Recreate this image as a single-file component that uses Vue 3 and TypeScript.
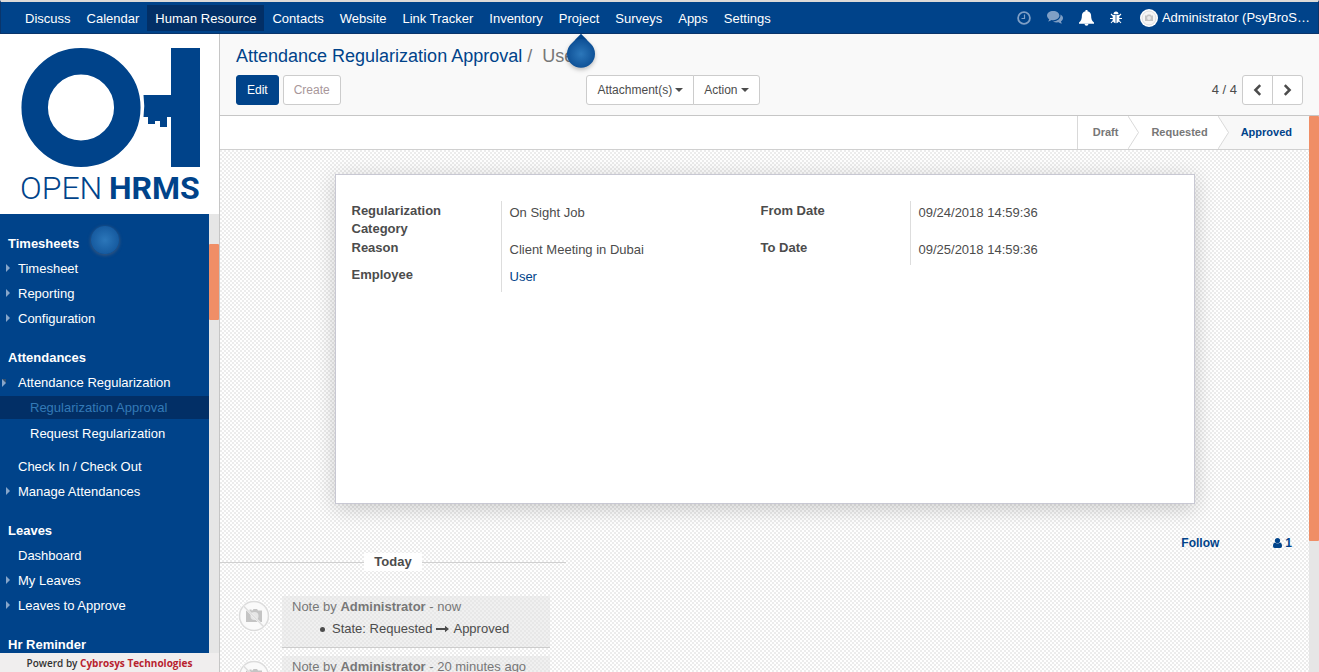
<script setup lang="ts">
import { ref } from 'vue'

interface MenuItem {
  label: string
  kind: 'section' | 'item' | 'sub'
  arrow?: 'closed' | 'expanded'
  active?: boolean
  last?: boolean
}

const topMenu: string[] = [
  'Discuss', 'Calendar', 'Human Resource', 'Contacts', 'Website', 'Link Tracker',
  'Inventory', 'Project', 'Surveys', 'Apps', 'Settings',
]
const activeApp = ref('Human Resource')

const sideMenu: MenuItem[] = [
  { label: 'Timesheets', kind: 'section' },
  { label: 'Timesheet', kind: 'item', arrow: 'closed' },
  { label: 'Reporting', kind: 'item', arrow: 'closed' },
  { label: 'Configuration', kind: 'item', arrow: 'closed' },
  { label: 'Attendances', kind: 'section' },
  { label: 'Attendance Regularization', kind: 'item', arrow: 'expanded' },
  { label: 'Regularization Approval', kind: 'sub', active: true },
  { label: 'Request Regularization', kind: 'sub', last: true },
  { label: 'Check In / Check Out', kind: 'item' },
  { label: 'Manage Attendances', kind: 'item', arrow: 'closed' },
  { label: 'Leaves', kind: 'section' },
  { label: 'Dashboard', kind: 'item' },
  { label: 'My Leaves', kind: 'item', arrow: 'closed' },
  { label: 'Leaves to Approve', kind: 'item', arrow: 'closed' },
  { label: 'Hr Reminder', kind: 'section' },
]

const groups = [
  [
    { label: 'Regularization Category', value: 'On Sight Job', tall: true },
    { label: 'Reason', value: 'Client Meeting in Dubai' },
    { label: 'Employee', value: 'User', link: true },
  ],
  [
    { label: 'From Date', value: '09/24/2018 14:59:36', tall: true },
    { label: 'To Date', value: '09/25/2018 14:59:36' },
  ],
]

const stages = ['Draft', 'Requested', 'Approved']
const messages = [
  { when: 'now', from: 'Requested', to: 'Approved' },
  { when: '20 minutes ago' },
]
</script>

<template>
  <div class="app">
    <header class="topbar">
      <nav class="apps">
        <a v-for="name in topMenu" :key="name" href="#" :class="{ active: name === activeApp }" @click.prevent="activeApp = name">
          {{ name }}<i v-if="name === 'Project'" class="drop"><svg width="32" height="40" viewBox="0 0 32 40">
            <defs>
              <radialGradient id="dropFill" gradientUnits="userSpaceOnUse" cx="16" cy="20" r="15">
                <stop offset="0" stop-color="#2c77ba" /><stop offset="1" stop-color="#0d4f95" />
              </radialGradient>
            </defs>
            <path d="M16 0 L26 10 A14 14 0 1 1 6 10Z" fill="url(#dropFill)" />
            <path d="M16 0 L22 6 Q16 4 10 6Z" fill="#00438a" />
          </svg></i>
        </a>
      </nav>
      <div class="tray">
        <button type="button" class="dim" aria-label="Activities">
          <svg width="14" height="14" viewBox="0 0 14 14" fill="none" stroke="currentColor"><circle cx="7" cy="7" r="5.9" stroke-width="1.8" /><path d="M7.5 3.5V7.5H4.5" stroke-width="1.2" /></svg>
        </button>
        <button type="button" class="dim" aria-label="Conversations">
          <svg width="16" height="13" viewBox="0 0 16 13" fill="currentColor"><path d="M6.2 0C9.700 0 12.400 2 12.400 4.600S9.700 9.200 6.200 9.200c-.6 0-1.200-.1-1.700-.2C3.500 9.900 2.300 10.300 1 10.400c.6-.6 1-1.300 1.200-2.200C.9 7.400 0 6.100 0 4.600 0 2 2.700 0 6.200 0z" /><path d="M13.300 3.500c1.700.8 2.700 2 2.700 3.500 0 1.400-.8 2.600-2.100 3.500.2.800.6 1.500 1.200 2.100-1.400-.1-2.600-.6-3.500-1.300-2 .3-4.200 0-5.700-.9 4.200.1 7.600-2.300 7.600-5.800 0-.4-.1-.8-.2-1.100z" /></svg>
        </button>
        <button type="button" aria-label="Notifications">
          <svg width="15" height="16" viewBox="0 0 15 16" fill="currentColor"><path d="M6.500 0h2v1.200c2.200.4 3.600 2.200 3.600 4.400 0 3.300.8 5.500 2.900 6.900v1.300H0v-1.300c2.100-1.400 2.900-3.600 2.900-6.900C2.900 3.400 4.300 1.600 6.500 1.200z" /><path d="M5.500 13.800h4a2 2 0 0 1-4 0z" /></svg>
        </button>
        <button type="button" aria-label="Debug">
          <svg width="12" height="13" viewBox="0 0 12 13"><path d="M3.500 3.200C3.500 1.500 4.500.6 6 .6s2.500.9 2.500 2.600z" fill="#fff" /><path d="M2.700 4h2.900v8.200C3.700 12 2.700 10.500 2.700 8.500zM6.400 4h2.900v4.500c0 2-1 3.500-2.900 3.700z" fill="#fff" /><path d="M3 5 1 3M3 7.500H0M3.200 9.500 1 12M9 5l2-2M9 7.500h3M8.800 9.500 11 12" stroke="#fff" stroke-width="1.100" /></svg>
        </button>
        <button type="button" class="user">
          <svg width="18" height="18" viewBox="0 0 18 18"><circle cx="9" cy="9" r="9" fill="#fff" /><circle cx="9" cy="9" r="7" fill="#f5f5f5" stroke="#ddd" /><path d="M5 6.500h2l.6-1h3l.6 1H13V12H5z" fill="#c4c4c4" /><circle cx="9" cy="9" r="1.900" fill="#e8e8e8" /></svg>
          <span>Administrator (PsyBroS…</span>
        </button>
      </div>
    </header>

    <div class="body">
      <aside class="sidebar">
        <a href="#" class="logo" aria-label="Open HRMS">
          <svg width="219" height="180" viewBox="0 0 219 180">
            <circle cx="81" cy="73.500" r="46.300" fill="none" stroke="#00438a" stroke-width="26.500" />
            <path d="M143.500 61H171V14h29v119h-29V83h-4v10h-7v-6h-5v3h-7v-7h-4.500q1.500-11 0-22z" fill="#00438a" />
            <text x="20" y="165" class="word-thin">OPEN</text>
            <text x="109" y="165" class="word-bold">HRMS</text>
          </svg>
        </a>
        <div class="side-scroll">
          <nav class="menu">
            <template v-for="m in sideMenu" :key="m.label">
              <h4 v-if="m.kind === 'section'">{{ m.label }}<i v-if="m.label === 'Timesheets'" class="pulse"></i></h4>
              <a v-else href="#" :class="[m.kind, m.arrow, { active: m.active, last: m.last }]" @click.prevent>{{ m.label }}</a>
            </template>
          </nav>
          <div class="track side-track"><i></i></div>
        </div>
        <footer>Powerd by <a href="#">Cybrosys Technologies</a></footer>
      </aside>

      <main>
        <section class="panel">
          <ol class="crumbs">
            <li><a href="#">Attendance Regularization Approval</a></li>
            <li class="here">User</li>
          </ol>
          <div class="actions">
            <div class="half">
              <div class="main-buttons">
                <button type="button" class="btn primary">Edit</button>
                <button type="button" class="btn muted">Create</button>
              </div>
              <div class="joined">
                <button type="button" class="btn">Attachment(s) <i class="caret"></i></button>
                <button type="button" class="btn">Action <i class="caret"></i></button>
              </div>
            </div>
            <div class="pager">
              <span>4 / 4</span>
              <div class="joined">
                <button type="button" class="btn" aria-label="Previous"><svg width="9" height="12" viewBox="0 0 9 12"><path d="M7.200 1.200 2.400 6l4.800 4.800" /></svg></button>
                <button type="button" class="btn" aria-label="Next"><svg width="9" height="12" viewBox="0 0 9 12"><path d="M1.800 1.200 6.600 6l-4.800 4.800" /></svg></button>
              </div>
            </div>
          </div>
        </section>

        <div class="view">
          <div class="form">
            <div class="statusbar">
              <div class="stages">
                <template v-for="(s, i) in stages" :key="s">
                  <svg v-if="i" class="chev" width="11" height="33" viewBox="0 0 11 33"><path v-if="i === 2" d="M0 0 10.500 16.500 0 33H11V0z" fill="#f8f8f8" /><path d="M0 0 10.500 16.500 0 33" fill="none" stroke="#d9d9d9" /></svg>
                  <button type="button" :class="{ current: s === 'Approved' }">{{ s }}</button>
                </template>
              </div>
            </div>

            <article class="sheet">
              <dl v-for="(g, gi) in groups" :key="gi">
                <div v-for="f in g" :key="f.label" class="field" :class="{ tall: f.tall }">
                  <dt>{{ f.label }}</dt>
                  <dd><a v-if="f.link" href="#">{{ f.value }}</a><template v-else>{{ f.value }}</template></dd>
                </div>
              </dl>
            </article>

            <section class="chatter">
              <div class="follow">
                <button type="button">Follow</button>
                <button type="button"><svg width="9" height="10" viewBox="0 0 9 10" fill="currentColor"><circle cx="4.500" cy="2.600" r="2.600" /><path d="M2 4.600C.5 5 0 6.300 0 8c0 1.300.7 2 1.700 2h5.600C8.300 10 9 9.300 9 8c0-1.700-.5-3-2-3.400-1.500 1.200-3.500 1.200-5 0z" /></svg> 1</button>
              </div>
              <div class="thread">
                <div class="day"><span>Today</span></div>
                <div v-for="m in messages" :key="m.when" class="message">
                  <svg class="avatar" width="32" height="32" viewBox="0 0 32 32">
                    <circle cx="16" cy="16" r="16" fill="#fff" />
                    <circle cx="16" cy="16" r="14.500" fill="#fafafa" stroke="#dcdcdc" stroke-width="1.600" />
                    <path d="M8 10.500h3.500V9.500h2v1h1l1-1.500h3.500l1 1.500h4V22H8z" fill="#c4c4c4" />
                    <circle cx="16.500" cy="16" r="4" fill="#e6e6e6" />
                    <path d="M5.500 6 26 27" stroke="#fafafa" stroke-width="2" /><path d="M5.500 6 26 27" stroke="#dcdcdc" stroke-width="1.400" />
                  </svg>
                  <div class="bubble">
                    <p>Note by <strong>Administrator</strong> - {{ m.when }}</p>
                    <ul v-if="m.to">
                      <li>State: {{ m.from }} <svg width="13" height="9" viewBox="0 0 13 9"><path d="M0 3h9V.8l4 3.200-4 3.200V5H0z" fill="#4c4c4c" /></svg> {{ m.to }}</li>
                    </ul>
                  </div>
                </div>
              </div>
            </section>
          </div>
          <div class="track view-track"><i></i></div>
        </div>
      </main>
    </div>
  </div>
</template>

<style>
body { margin: 0; }
</style>

<style scoped>
.app, .app * { box-sizing: border-box; }
.app {
  display: flex; flex-direction: column; height: 100vh; overflow: hidden;
  font: 13px/18px "Liberation Sans", Arial, sans-serif; color: #4c4c4c; background: #fff;
}
a { color: #00438a; text-decoration: none; }
button { font: inherit; color: inherit; background: none; border: 0; padding: 0; margin: 0; cursor: pointer; }
p, ul, ol, dl, dd, h4 { margin: 0; padding: 0; }
svg { display: block; flex: none; }

.topbar {
  flex: none; display: flex; justify-content: space-between; height: 34px; padding: 0 8px 0 16px;
  background: #00438a; border: 1px solid #0a356b; border-top: 2px solid #dcdad8; color: #fff;
}
.apps { display: flex; padding: 3px 0 2px; }
.apps a { position: relative; color: #fff; padding: 1px 8px 0; line-height: 26px; white-space: nowrap; }
.apps a.active { background: #022f66; }
.drop { position: absolute; top: 29px; left: 50%; margin-left: -14px; z-index: 2; filter: drop-shadow(0 2px 2px rgba(0, 0, 0, .25)); }
.tray { display: flex; align-items: center; gap: 16px; }
.tray .dim { color: #7f9fc5; }
.user { display: flex; align-items: center; gap: 4px; white-space: nowrap; padding: 1px 0 0 2px; }

.body { flex: 1; display: flex; min-height: 0; }
.sidebar { flex: none; width: 220px; display: flex; flex-direction: column; border-right: 1px solid #c6c6c6; }
.word-thin, .word-bold { font-family: Roboto, sans-serif; font-size: 32px; fill: #00438a; }
.word-thin { font-weight: 300; }
.word-bold { font-weight: 700; }
.side-scroll { flex: 1; display: flex; min-height: 0; overflow: hidden; }
.menu { flex: 1; min-width: 0; background: #00438a; padding-top: 3px; }
.menu h4 { position: relative; margin-top: 14px; padding-left: 8px; font-size: 13px; line-height: 25px; color: #fff; }
.menu a { position: relative; display: block; color: #fff; padding-left: 18px; line-height: 25px; white-space: nowrap; }
.menu a.sub { padding-left: 30px; margin: 1px 0 3px; line-height: 23px; }
.menu a.last { margin-bottom: 9px; }
.menu a.active { background: #022f66; color: #337ab7; }
.menu a.closed::before, .menu a.expanded::before {
  content: ""; position: absolute; left: 6px; top: 8px;
  border: 4px solid transparent; border-left-color: #87a6ca; border-right-width: 0;
}
.menu a.expanded::before { left: 2px; top: 9px; border-top-color: #33506f; }
.pulse {
  position: absolute; left: 91px; top: -5px; width: 28px; height: 28px; border-radius: 50%;
  background: radial-gradient(#2c77ba, #0d4f95); box-shadow: 0 1px 3px 1px rgba(90, 100, 120, .5);
}
.track { flex: none; width: 10px; background: #e6e6e6; }
.track i { display: block; background: #f08e66; border-radius: 1px; }
.side-track { padding-top: 30px; }
.side-track i { height: 76px; }
.view-track { height: 100%; }
.view-track i { height: 76.500%; }
footer { height: 19px; flex: none; background: #f0eeee; text-align: center; font: 600 10px/20px "Open Sans", sans-serif; color: #333; }
footer a { color: #b8232f; font-weight: 700; }

main { flex: 1; min-width: 0; display: flex; flex-direction: column; }
.panel { flex: none; background: #f9f9f9; border-bottom: 1px solid #c6c6c6; padding: 10px 16px; }
.crumbs { display: flex; list-style: none; font-size: 18px; line-height: 25px; margin-bottom: 6px; }
.here { color: #777; }
.here::before { content: "/"; padding: 0 10px 0 5px; }
.actions { display: flex; align-items: center; }
.half { flex: 1; display: flex; justify-content: space-between; padding-right: 20px; }
.main-buttons { display: flex; gap: 4px; }
.btn {
  display: flex; align-items: center; gap: 3px; height: 30px; padding: 0 10px;
  font-size: 12px; background: #fff; border: 1px solid #ccc; border-radius: 3px;
}
.btn.primary { background: #00438a; border-color: #00438a; color: #fff; }
.btn.muted { color: #a8979a; }
.caret { border: 4px solid transparent; border-top-color: #4c4c4c; border-bottom-width: 0; }
.joined { display: flex; }
.joined .btn:first-child { border-radius: 3px 0 0 3px; }
.joined .btn:last-child { border-radius: 0 3px 3px 0; margin-left: -1px; }
.pager { flex: 1; display: flex; align-items: center; justify-content: flex-end; gap: 5px; }
.pager path { fill: none; stroke: #4c4c4c; stroke-width: 2.5; }

.view { flex: 1; display: flex; min-height: 0; overflow: hidden; }
.form {
  flex: 1; min-width: 0; overflow: hidden;
  background: repeating-conic-gradient(#ececec 0 25%, #fff 0 50%) 0 0 / 4px 4px;
}
.statusbar { display: flex; justify-content: flex-end; height: 34px; background: #fff; border-bottom: 1px solid #d0d0d0; }
.stages { display: flex; border-left: 1px solid #d9d9d9; }
.stages button { font-size: 11px; font-weight: bold; color: #777; padding: 0 10px 2px 15px; }
.stages button + .chev + button { padding-left: 12px; }
.stages button.current { color: #00438a; background: #f8f8f8; padding-right: 17px; }

.sheet {
  display: grid; grid-template-columns: 1fr 1fr; max-width: 860px; min-height: 330px; margin: 24px auto 0;
  padding: 26px 24px 16px 16px; background: #fff; border: 1px solid #c8c8d3; box-shadow: 0 4px 20px rgba(0, 0, 0, .2);
}
.field { display: grid; grid-template-columns: 149px 1fr; min-height: 27px; }
.field.tall { min-height: 37px; }
dt { font-weight: bold; padding: 1px 30px 0 0; }
dd { border-left: 1px solid #ddd; padding: 3px 8px 6px; }

.follow { display: flex; justify-content: flex-end; gap: 54px; padding: 30px 17px 0; color: #00438a; font-size: 12px; font-weight: bold; }
.follow button { display: flex; align-items: center; gap: 3px; line-height: 18px; }
.thread { width: 346px; }
.day { display: flex; align-items: center; font-weight: bold; margin: 1px 0 25px; }
.day::before, .day::after { content: ""; flex: 1; border-top: 1px solid #d0d0d0; }
.day span { background: #fff; padding: 0 10px; }
.message { display: flex; gap: 12px; padding: 0 16px 0 18px; margin-bottom: 8px; }
.avatar { margin-top: 4px; }
.bubble { flex: 1; min-width: 0; min-height: 52px; padding: 2px 10px; background: rgba(225, 225, 225, .5); border-bottom: 1px solid #ccc; }
.bubble p { color: #777; white-space: nowrap; }
.bubble ul { padding: 4px 0 0 28px; list-style: none; }
.bubble li { display: flex; align-items: center; gap: 4px; }
.bubble li::before { content: ""; width: 5px; height: 5px; margin-right: 3px; border-radius: 50%; background: #4c4c4c; }
</style>
